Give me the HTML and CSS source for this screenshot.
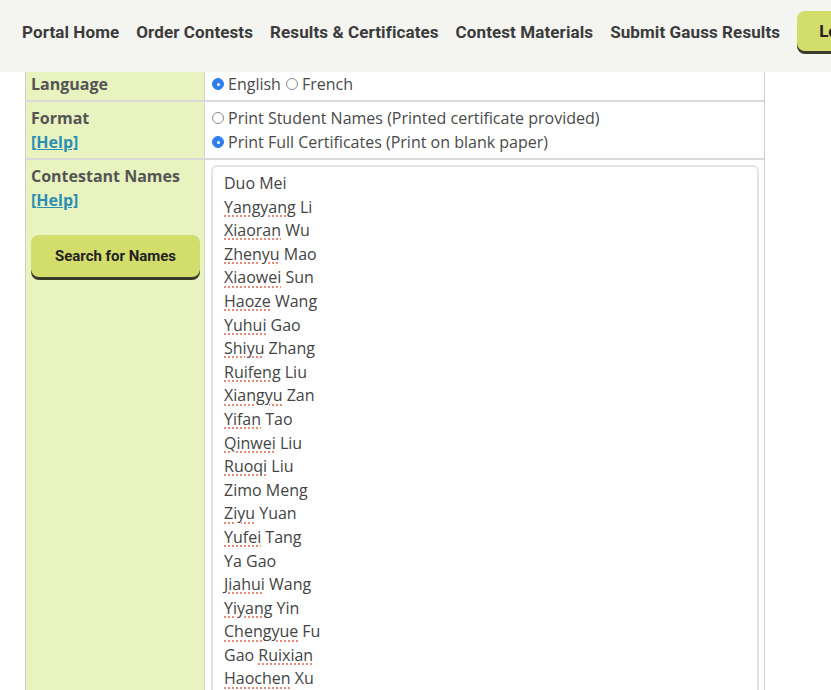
FILE: index.html
```html
<!DOCTYPE html>
<html lang="en">
<head>
<meta charset="utf-8">
<title>Results &amp; Certificates</title>
<link rel="stylesheet" href="styles.css">
</head>
<body>
<header class="topbar">
  <nav class="nav">
    <a class="nav-link" href="#">Portal Home</a>
    <a class="nav-link" href="#">Order Contests</a>
    <a class="nav-link" href="#">Results &amp; Certificates</a>
    <a class="nav-link" href="#">Contest Materials</a>
    <a class="nav-link" href="#">Submit Gauss Results</a>
    <a class="btn btn-logout" href="#">Logout</a>
  </nav>
</header>
<main class="content">
  <div class="form-table">
    <div class="row row-lang">
      <div class="label-cell"><span class="label">Language</span></div>
      <div class="value-cell">
        <label class="radio"><span class="dot checked"></span>English</label>
        <label class="radio"><span class="dot"></span>French</label>
      </div>
    </div>
    <div class="row row-format">
      <div class="label-cell">
        <span class="label">Format</span>
        <a class="help" href="#">[Help]</a>
      </div>
      <div class="value-cell stack">
        <label class="radio"><span class="dot"></span>Print Student Names (Printed certificate provided)</label>
        <label class="radio"><span class="dot checked"></span>Print Full Certificates (Print on blank paper)</label>
      </div>
    </div>
    <div class="row row-names">
      <div class="label-cell">
        <span class="label">Contestant Names</span>
        <a class="help" href="#">[Help]</a>
        <button class="btn btn-search" type="button">Search for Names</button>
      </div>
      <div class="value-cell names-cell">
        <div class="names-box">
          <div>Duo Mei</div>
          <div><span class="sp">Yangyang</span> Li</div>
          <div><span class="sp">Xiaoran</span> Wu</div>
          <div><span class="sp">Zhenyu</span> Mao</div>
          <div><span class="sp">Xiaowei</span> Sun</div>
          <div><span class="sp">Haoze</span> Wang</div>
          <div><span class="sp">Yuhui</span> Gao</div>
          <div><span class="sp">Shiyu</span> Zhang</div>
          <div><span class="sp">Ruifeng</span> Liu</div>
          <div><span class="sp">Xiangyu</span> Zan</div>
          <div><span class="sp">Yifan</span> Tao</div>
          <div><span class="sp">Qinwei</span> Liu</div>
          <div><span class="sp">Ruoqi</span> Liu</div>
          <div>Zimo Meng</div>
          <div><span class="sp">Ziyu</span> Yuan</div>
          <div><span class="sp">Yufei</span> Tang</div>
          <div>Ya Gao</div>
          <div><span class="sp">Jiahui</span> Wang</div>
          <div><span class="sp">Yiyang</span> Yin</div>
          <div><span class="sp">Chengyue</span> Fu</div>
          <div>Gao <span class="sp">Ruixian</span></div>
          <div><span class="sp">Haochen</span> Xu</div>
        </div>
      </div>
    </div>
  </div>
</main>
</body>
</html>
```
FILE: styles.css
```css
html, body {
  margin: 0;
  padding: 0;
  background: #ffffff;
  overflow: hidden;
  height: 690px;
}
body {
  font-family: "Open Sans", "Liberation Sans", sans-serif;
  color: #444;
}
.topbar {
  height: 72px;
  background: #f4f4f1;
  box-sizing: border-box;
}
.nav {
  display: flex;
  align-items: center;
  height: 64px;
  padding-left: 22px;
  gap: 17px;
  white-space: nowrap;
}
.nav-link {
  font-family: Roboto, "Liberation Sans", sans-serif;
  font-weight: 700;
  font-size: 17px;
  color: #3b3b3b;
  text-decoration: none;
  letter-spacing: 0.1px;
}
.btn {
  font-family: Roboto, "Liberation Sans", sans-serif;
  font-weight: 700;
  color: #222;
  background: #d3dd6b;
  border: none;
  border-radius: 8px;
  box-shadow: 0 3px 0 #3a3a2a;
  text-decoration: none;
  display: inline-flex;
  align-items: center;
  justify-content: center;
}
.btn-logout {
  height: 40px;
  padding: 0 22px;
  font-size: 17px;
  flex-shrink: 0;
  margin-top: -2px;
}
.content {
  padding-left: 25px;
}
.form-table {
  width: 740px;
  border-left: 1px solid #cfcfcf;
  border-right: 1px solid #cfcfcf;
  box-sizing: border-box;
}
.row {
  display: grid;
  grid-template-columns: 179px 1fr;
  border-bottom: 2px solid #dadada;
}
.label-cell {
  background: #e8f3c0;
  border-right: 1px solid #d6d6d6;
  padding: 5px;
  display: flex;
  flex-direction: column;
  align-items: flex-start;
}
.value-cell {
  padding: 5px 6px;
  display: flex;
  align-items: center;
  gap: 4px;
}
.value-cell.stack {
  flex-direction: column;
  align-items: flex-start;
  gap: 0;
}
.row-lang .label-cell,
.row-lang .value-cell {
  padding-top: 0;
  padding-bottom: 4px;
}
.row-format .label-cell,
.row-format .value-cell {
  padding-top: 4px;
  padding-bottom: 4px;
}
.row-names .label-cell {
  padding-top: 4px;
}
.label {
  font-weight: 700;
  font-size: 16px;
  line-height: 24px;
  color: #555;
}
.help {
  font-weight: 700;
  font-size: 16px;
  line-height: 24px;
  color: #2b8fb4;
  text-decoration: underline;
}
.radio {
  display: inline-flex;
  align-items: center;
  font-size: 16px;
  line-height: 24px;
  color: #4a4a4a;
}
.dot {
  width: 12px;
  height: 12px;
  border-radius: 50%;
  border: 1px solid #8a8a8a;
  box-sizing: border-box;
  margin-right: 4px;
  margin-left: 1px;
  background: #fff;
  position: relative;
}
.dot.checked {
  background: #2f7ef0;
  border-color: #2f7ef0;
}
.dot.checked::after {
  content: "";
  position: absolute;
  left: 3.5px;
  top: 3.5px;
  width: 3px;
  height: 3px;
  border-radius: 50%;
  background: #fff;
}
.btn-search {
  margin-top: 23px;
  width: 169px;
  height: 42px;
  font-size: 15px;
  margin-left: 0;
}
.names-cell {
  align-items: flex-start;
  padding: 5px 5px 0 6px;
}
.names-box {
  width: 548px;
  height: 600px;
  box-sizing: border-box;
  border: 2px solid #e4e4e4;
  border-radius: 6px;
  padding: 5px 11px;
  font-size: 16px;
  line-height: 23.6px;
  color: #444;
}
.sp {
  text-decoration-line: underline;
  text-decoration-style: dotted;
  text-decoration-color: #e0705c;
  text-underline-offset: 3px;
}
```
